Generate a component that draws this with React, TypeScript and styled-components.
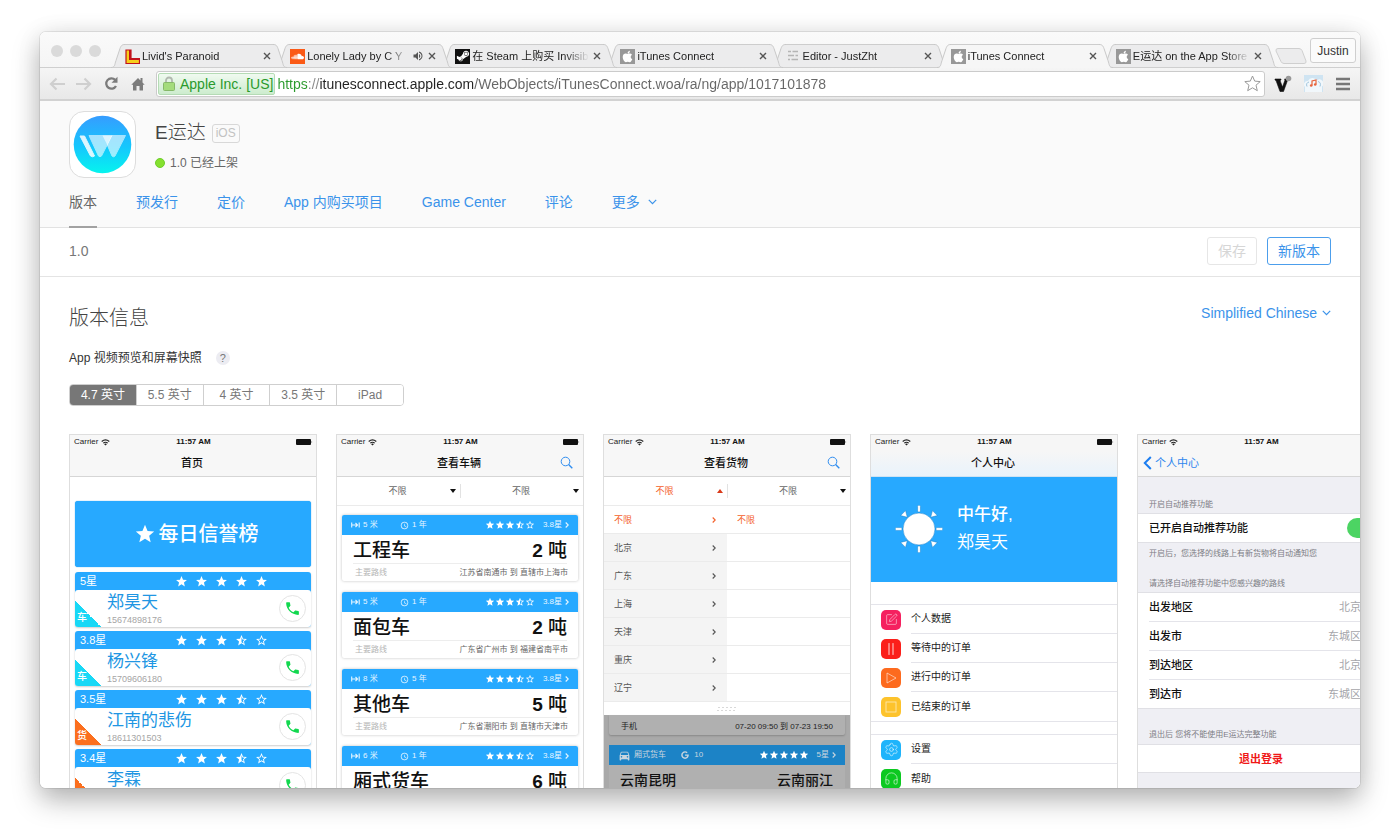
import React from "react";
import styled, { createGlobalStyle, css } from "styled-components";
import { FaApple, FaGoogle, FaSoundcloud, FaSteamSymbol } from "react-icons/fa";
import {
  MdAccessTime,
  MdDirectionsCar,
  MdPhone,
  MdStar,
  MdStarBorder,
  MdStarHalf,
  MdVolumeUp,
} from "react-icons/md";
import { Headphones, Settings, SquarePen } from "lucide-react";

const sans = `"Liberation Sans", "Noto Sans CJK SC", sans-serif`;
const link = "#3b93ea";
const brand = "#27a9ff";
const orange = "#f4602a";

const GlobalStyle = createGlobalStyle`
  *, *::before, *::after { box-sizing: border-box; }
  body {
    margin: 0;
    background: #fff;
    color: #444;
    font-family: ${sans};
    font-size: 14px;
    line-height: 20px;
  }
  button, input { font: inherit; color: inherit; margin: 0; }
  button { padding: 0; border: 0; background: none; cursor: pointer; }
  a { text-decoration: none; }
  h1, h2, h3, p, ul { margin: 0; padding: 0; font-weight: 400; }
  ul { list-style: none; }
  svg { display: block; flex: none; }
`;

/* ---------- Browser window ---------- */

const Desktop = styled.div`
  padding: 32px 40px 48px;
  height: 100vh;
  overflow: hidden;
`;

const Window = styled.div`
  display: flex;
  flex-direction: column;
  height: 100%;
  overflow: hidden;
  border-radius: 6px;
  background: #fff;
`;

const WindowShadow = styled.div`
  height: 100%;
  border-radius: 6px;
  box-shadow: 0 0 0 1px rgba(0, 0, 0, 0.08), 0 12px 28px rgba(0, 0, 0, 0.28), 0 2px 26px rgba(0, 0, 0, 0.08);
`;

const TabStrip = styled.div`
  display: flex;
  flex: none;
  height: 36px;
  padding: 0 4px 0 11px;
  background: linear-gradient(#fafafa, #f5f5f5);
  box-shadow: inset 0 -1px #cfcfcf;
`;

const Lights = styled.div`
  display: flex;
  gap: 7px;
  width: 60px;
  padding-top: 13px;
`;

const Light = styled.button`
  width: 12px;
  height: 12px;
  border-radius: 50%;
  background: #dadada;
`;

const Tabs = styled.div`
  display: flex;
  flex: 1;
  min-width: 0;
  padding-top: 12px;
`;

const Tab = styled.div<{ $level: number }>`
  position: relative;
  z-index: ${(p) => p.$level};
  display: flex;
  flex: 1 1 0;
  min-width: 0;
  height: 24px;
  color: #222;
  font-size: 11px;

  & + & {
    margin-left: -11px;
  }
`;

const TabBody = styled.div<{ $active?: boolean }>`
  display: flex;
  flex: 1;
  align-items: center;
  gap: 2px;
  min-width: 0;
  border-top: 1px solid #cdcdcd;
  border-bottom: 1px solid ${(p) => (p.$active ? "#f6f6f6" : "#cfcfcf")};
  background: ${(p) => (p.$active ? "#f6f6f6" : "#ececed")};
`;

const TabTitle = styled.span`
  flex: 1;
  min-width: 0;
  overflow: hidden;
  white-space: nowrap;
  mask-image: linear-gradient(90deg, #000 calc(100% - 24px), transparent);
`;

const TabClose = styled.button`
  width: 12px;
  height: 12px;
  display: grid;
  place-items: center;
`;

const Favicon = styled.span<{ $bg?: string }>`
  display: grid;
  flex: none;
  place-items: center;
  width: 15px;
  height: 15px;
  overflow: hidden;
  background: ${(p) => p.$bg ?? "transparent"};
  color: #fff;
`;

const NewTab = styled.button`
  align-self: flex-end;
  margin: 0 3px 4px -3px;
`;

const Profile = styled.button`
  align-self: flex-start;
  width: 46px;
  height: 25px;
  margin-top: 6px;
  border: 1px solid #cfcfcf;
  border-radius: 3px;
  background: #fbfbfb;
  color: #333;
  font-size: 12px;
`;

const Toolbar = styled.div`
  display: flex;
  flex: none;
  align-items: center;
  gap: 9px;
  height: 33px;
  padding: 0 9px 0 8px;
  border-bottom: 2px solid #d2d2d2;
  background: linear-gradient(#f5f5f5, #e8e8e8);
`;

const ToolButton = styled.button<{ $muted?: boolean }>`
  display: grid;
  place-items: center;
  width: 18px;
  height: 20px;
  color: ${(p) => (p.$muted ? "#cfcfcf" : "#7c7c7c")};
`;

const Omnibox = styled.div`
  display: flex;
  flex: 1;
  align-items: center;
  gap: 2px;
  height: 26px;
  padding: 0 3px 0 1px;
  border: 1px solid #cbcbcb;
  border-radius: 3px;
  background: #fff;
`;

const SecureBadge = styled.button`
  display: flex;
  align-items: center;
  gap: 5px;
  height: 22px;
  padding: 0 1px 0 4px;
  border: 1px solid #b5dbb5;
  border-radius: 2px;
  background: linear-gradient(#f0faf0, #cdecce);
  color: #2a9a2c;
  white-space: nowrap;
`;

/* The scheme is green, the host black and the path grey. */
const UrlInput = styled.input`
  flex: 1;
  min-width: 0;
  height: 22px;
  padding: 0;
  border: 0;
  outline: 0;
  background: linear-gradient(90deg, #2a9a2c 32px, #888 32px 43px, #222 43px 196px, #666 196px);
  background-clip: text;
  -webkit-background-clip: text;
  -webkit-text-fill-color: transparent;
`;

const Extensions = styled.div`
  display: flex;
  align-items: center;
  gap: 12px;
`;

/* ---------- iTunes Connect page ---------- */

const Header = styled.header`
  flex: none;
  padding: 10px 29px 0;
  border-bottom: 1px solid #e2e2e2;
  background: #fafafa;
`;

const AppSummary = styled.div`
  display: flex;
  gap: 19px;
  height: 67px;
`;

const AppIcon = styled.div`
  display: grid;
  place-items: center;
  width: 67px;
  height: 67px;
  border: 1px solid #ddd;
  border-radius: 15px;
  background: #fff;
`;

const AppName = styled.div`
  display: flex;
  align-items: center;
  gap: 6px;
  height: 28px;
  margin-top: 8px;
`;

const AppTitle = styled.h1`
  color: #444;
  font-size: 19px;
  font-weight: 300;
`;

const Platform = styled.span`
  padding: 0 3px;
  border: 1px solid #d8d8d8;
  border-radius: 3px;
  color: #c2c2c2;
  font-size: 12px;
  line-height: 17px;
`;

const Status = styled.p`
  display: flex;
  align-items: center;
  gap: 5px;
  margin-top: 6px;
  color: #666;
  font-size: 12px;

  &::before {
    content: "";
    width: 10px;
    height: 10px;
    border: 1px solid #6dcf2a;
    border-radius: 50%;
    background: #85e02f;
  }
`;

const Nav = styled.nav`
  display: flex;
  gap: 39px;
  margin-bottom: -1px;
`;

const NavLink = styled.a<{ $active?: boolean }>`
  display: flex;
  align-items: center;
  gap: 8px;
  padding: 14px 0;
  border-bottom: 2px solid ${(p) => (p.$active ? "#a2a2a2" : "transparent")};
  color: ${(p) => (p.$active ? "#666" : link)};
`;

const VersionBar = styled.div`
  display: flex;
  flex: none;
  align-items: center;
  gap: 10px;
  height: 49px;
  padding: 0 29px 2px;
  border-bottom: 1px solid #e4e4e4;
  color: #777;
`;

const VersionNumber = styled.span`
  flex: 1;
`;

const ActionButton = styled.button<{ $primary?: boolean }>`
  height: 28px;
  padding: 0 10px;
  border: 1px solid ${(p) => (p.$primary ? "#4c9eec" : "#e6e6e6")};
  border-radius: 3px;
  background: #fff;
  color: ${(p) => (p.$primary ? link : "#d6d6d6")};
`;

const Content = styled.main`
  display: flex;
  flex: 1;
  flex-direction: column;
  min-height: 0;
  padding: 26px 0 0 29px;
`;

const SectionHead = styled.div`
  display: flex;
  align-items: flex-start;
  justify-content: space-between;
  padding-right: 29px;
`;

const SectionTitle = styled.h2`
  font-size: 20px;
  font-weight: 300;
  line-height: 30px;
`;

const LanguageButton = styled.button`
  display: flex;
  align-items: center;
  gap: 5px;
  color: ${link};
`;

const SubTitle = styled.h3`
  display: flex;
  align-items: center;
  gap: 14px;
  margin-top: 15px;
  color: #333;
  font-size: 12px;
`;

const Help = styled.button`
  width: 14px;
  height: 14px;
  border-radius: 50%;
  background: #ececf2;
  color: #777;
  font-size: 11px;
  line-height: 14px;
`;

const Segments = styled.div`
  display: flex;
  flex: none;
  align-self: flex-start;
  width: 335px;
  margin-top: 16px;
  overflow: hidden;
  border: 1px solid #cfcfcf;
  border-radius: 4px;
`;

const Segment = styled.button<{ $active?: boolean }>`
  flex: 1 1 0;
  height: 20px;
  background: ${(p) => (p.$active ? "#777" : "#fff")};
  color: ${(p) => (p.$active ? "#fff" : "#777")};
  font-size: 12px;

  & + & {
    border-left: 1px solid #cfcfcf;
  }
`;

const Strip = styled.div`
  display: flex;
  flex: 1;
  align-items: flex-start;
  gap: 19px;
  min-height: 0;
  margin-top: 28px;
  overflow: hidden;
`;

/* ---------- Phone previews ---------- */

const Phone = styled.article<{ $bg?: string }>`
  flex: 0 0 248px;
  height: 440px;
  overflow: hidden;
  border: 1px solid #dedede;
  background: ${(p) => p.$bg ?? "#fff"};
  color: #222;
  font-size: 8px;
  line-height: 12px;
`;

const PhoneHeader = styled.div<{ $tinted?: boolean }>`
  height: 42px;
  border-bottom: 1px solid ${(p) => (p.$tinted ? "#cfe3f3" : "#d6d6d6")};
  background: ${(p) => (p.$tinted ? "linear-gradient(#f6f6f6 40%, #e9f3fb)" : "#f7f7f7")};
`;

const StatusBar = styled.div`
  display: grid;
  grid-template-columns: 1fr auto 1fr;
  align-items: center;
  height: 14px;
  padding: 0 3px 0 4px;
`;

const Carrier = styled.span`
  display: flex;
  align-items: center;
  gap: 3px;
`;

const Clock = styled.b`
  color: #111;
`;

const BatterySlot = styled.span`
  justify-self: end;
`;

const PhoneNav = styled.div`
  display: grid;
  grid-template-columns: 1fr auto 1fr;
  align-items: center;
  height: 27px;
  padding: 0 10px 0 8px;
`;

const PhoneTitle = styled.span`
  grid-column: 2;
  color: #111;
  font-size: 11px;
  font-weight: 500;
`;

const NavSearch = styled.button`
  justify-self: end;
  color: #2f8df0;
`;

const BackButton = styled.button`
  display: flex;
  align-items: center;
  gap: 3px;
  margin-left: -3px;
  color: #2d86ee;
  font-size: 11px;
  line-height: 16px;
`;

/* Ranking screen */

const Ranking = styled.div`
  padding: 24px 5px 0;
`;

const Banner = styled.div`
  display: flex;
  align-items: center;
  justify-content: center;
  gap: 3px;
  height: 66px;
  margin-bottom: 5px;
  padding-left: 6px;
  border-radius: 3px;
  background: ${brand};
  box-shadow: 0 0 1px #0b86dd;
  color: #fff;
  font-size: 20px;
  font-weight: 500;
`;

const RankCard = styled.div`
  height: 55px;
  margin-bottom: 4px;
  border-radius: 3px;
  background: ${brand};
  box-shadow: 0 1px 2px rgba(0, 0, 0, 0.2);
`;

const RankHead = styled.div`
  display: flex;
  align-items: center;
  height: 18px;
  padding: 0 43px 0 5px;
  color: #fff;
  font-size: 11px;
`;

const StarRow = styled.span<{ $gap: number }>`
  display: flex;
  gap: ${(p) => p.$gap}px;
  margin-left: auto;
  color: #fff;
`;

const RankBody = styled.div`
  display: flex;
  align-items: center;
  height: 37px;
  padding-right: 5px;
  overflow: hidden;
  border-radius: 3px;
  background: #fff;
`;

const Corner = styled.span<{ $color: string }>`
  align-self: flex-end;
  width: 26px;
  height: 26px;
  padding: 11px 0 0 2px;
  background: linear-gradient(45deg, ${(p) => p.$color} 50%, transparent 50%);
  color: #fff;
  font-size: 10px;
  font-weight: 500;
`;

const Person = styled.div`
  flex: 1;
  padding-left: 6px;
`;

const PersonName = styled.div`
  color: #2196e3;
  font-size: 17px;
  line-height: 22px;
`;

const PersonPhone = styled.div`
  color: #a5a5a5;
  font-size: 9px;
`;

const CallButton = styled.button`
  display: grid;
  place-items: center;
  width: 27px;
  height: 27px;
  border: 1px solid #e4e4e4;
  border-radius: 50%;
  color: #12d84f;
`;

/* Vehicle and cargo screens */

const Filters = styled.div`
  display: grid;
  grid-template-columns: 1fr 1fr;
  height: 29px;
  padding: 7px 0;
  border-bottom: 1px solid #ebebeb;
`;

const Filter = styled.button<{ $open?: boolean }>`
  display: grid;
  grid-template-columns: 1fr 10px;
  align-items: center;
  padding-left: 8px;
  color: ${(p) => (p.$open ? orange : "#666")};
  font-size: 9px;

  & + & {
    border-left: 1px solid #e2e2e2;
  }
`;

const Caret = styled.span<{ $up?: boolean }>`
  border: 3px solid transparent;
  ${(p) =>
    p.$up
      ? css`
          border-top: 0;
          border-bottom: 4px solid #d93a1a;
        `
      : css`
          border-bottom: 0;
          border-top: 4px solid #111;
        `}
  justify-self: start;
`;

const Vehicles = styled.div`
  display: grid;
  gap: 11px;
  padding: 9px 5px;
`;

const VehicleCard = styled.div`
  height: 66px;
  overflow: hidden;
  border-radius: 2px;
  background: #fff;
  box-shadow: 0 0 3px rgba(0, 0, 0, 0.25);
`;

const VehicleHead = styled.div<{ $dim?: boolean }>`
  display: flex;
  align-items: center;
  gap: 8px;
  height: 20px;
  padding: 0 9px;
  background: ${(p) => (p.$dim ? "#1c83c6" : brand)};
  color: ${(p) => (p.$dim ? "#c9d5de" : "#e6f5ff")};
  white-space: nowrap;
`;

const Fact = styled.span<{ $width?: number }>`
  display: flex;
  align-items: center;
  gap: 3px;
  width: ${(p) => (p.$width ? `${p.$width}px` : "auto")};
`;

const VehicleMain = styled.div`
  display: flex;
  align-items: center;
  justify-content: space-between;
  height: 29px;
  margin: 0 11px;
  padding-top: 3px;
  border-bottom: 1px solid #ededed;
  color: #111;
  font-size: 19px;
  font-weight: 500;
`;

const VehicleRoute = styled.div`
  display: flex;
  align-items: center;
  justify-content: space-between;
  height: 17px;
  padding: 0 10px 0 13px;
  color: #666;
`;

const Faint = styled.span`
  color: #b5b5b5;
`;

const RegionRow = styled.div`
  display: grid;
  grid-template-columns: 1fr 1fr;
  height: 28px;
`;

const RegionButton = styled.button<{ $active?: boolean }>`
  display: flex;
  align-items: center;
  justify-content: space-between;
  padding: 1px 11px 0 10px;
  border-bottom: 1px solid #ebebeb;
  background: ${(p) => (p.$active ? "#fff" : "#f4f4f4")};
  color: ${(p) => (p.$active ? orange : "#555")};
  font-size: 9px;
`;

const CityButton = styled.button`
  padding: 1px 10px 0;
  border-bottom: 1px solid #ebebeb;
  color: ${orange};
  font-size: 9px;
  text-align: left;
`;

const Grip = styled.div`
  display: grid;
  place-items: center;
  height: 13px;
  background: #fff;
`;

const Dimmed = styled.div`
  height: 90px;
  padding: 0 5px;
  background: #a9a9a9;
`;

const DimmedRow = styled.div`
  display: flex;
  align-items: center;
  justify-content: space-between;
  height: 20px;
  margin-bottom: 10px;
  padding: 3px 12px 0;
  border-radius: 0 0 2px 2px;
  background: #b0b0b0;
  box-shadow: 0 1px 2px rgba(0, 0, 0, 0.2);
`;

const DimmedRoute = styled.div`
  display: flex;
  align-items: center;
  justify-content: space-between;
  height: 30px;
  padding: 0 12px 0 11px;
  background: #b0b0b0;
  color: #111;
  font-size: 14px;
  font-weight: 500;
`;

/* Profile screen */

const Hero = styled.div`
  display: flex;
  align-items: center;
  gap: 14px;
  height: 105px;
  padding: 0 0 2px 24px;
  background: ${brand};
  color: #fff;
  font-size: 17px;
  line-height: 28px;
`;

const Greeting = styled.div`
  font-weight: 500;
`;

const Menu = styled.ul`
  margin-top: 22px;
  border-top: 1px solid #e4e4ea;
  border-bottom: 1px solid #e4e4ea;

  & + & {
    margin-top: 12px;
  }
`;

const MenuItem = styled.li`
  display: flex;
  align-items: center;
  gap: 10px;
  height: 29px;
  padding-left: 10px;

  &:last-child > button {
    border-bottom: 0;
  }
`;

const MenuIcon = styled.span<{ $color: string }>`
  display: grid;
  place-items: center;
  width: 20px;
  height: 20px;
  border-radius: 5px;
  background: ${(p) => p.$color};
  color: rgba(255, 255, 255, 0.6);
`;

const MenuLabel = styled.button`
  flex: 1;
  height: 29px;
  border-bottom: 1px solid #e4e4ea;
  font-size: 10px;
  text-align: left;
`;

/* Settings screen */

const GroupNote = styled.p<{ $top: number; $bottom: number }>`
  padding: ${(p) => `${p.$top}px 11px ${p.$bottom}px`};
  color: #7d7d84;
  white-space: nowrap;
`;

const Group = styled.div`
  border-top: 1px solid #e0e0e5;
  border-bottom: 1px solid #e0e0e5;
  background: #fff;
`;

const SettingRow = styled.label`
  display: flex;
  align-items: center;
  justify-content: space-between;
  height: 28px;
  margin-left: 11px;
  color: #111;
  font-size: 11px;
  font-weight: 500;

  & + & {
    border-top: 1px solid #e4e4ea;
    height: 29px;
  }
`;

const SettingValue = styled.span`
  padding-right: 23px;
  color: #a5a5aa;
  font-weight: 400;
`;

const Toggle = styled.input`
  appearance: none;
  width: 34px;
  height: 20px;
  margin-right: 3px;
  border-radius: 10px;
  background: radial-gradient(circle at 24px 10px, #fff 9px, #4cd463 9px);
`;

const SignOut = styled.button`
  display: block;
  width: 100%;
  height: 27px;
  color: #f01818;
  font-size: 11px;
  font-weight: 700;
`;

/* ---------- Icons ---------- */

const TabEdge = ({ active, right }: { active?: boolean; right?: boolean }) => (
  <svg width="14" height="24" viewBox="0 0 14 24" aria-hidden="true">
    <g transform={right ? "translate(14 0) scale(-1 1)" : undefined}>
      <path
        d="M0 24 C4 24 3.500 21 5 16.500 L8.500 6 C9.800 2 10.500 .5 14 .5 V24 Z"
        fill={active ? "#f6f6f6" : "#ececed"}
      />
      <path d="M0 23.500 C4 23.500 3.500 21 5 16.500 L8.500 6 C9.800 2 10.500 .5 14 .5" fill="none" stroke="#c8c8c8" />
      {!active && <path d="M2 23.500 H14" stroke="#cfcfcf" />}
    </g>
  </svg>
);

const CloseIcon = () => (
  <svg width="8" height="8" viewBox="0 0 8 8" aria-hidden="true">
    <path d="M1 1 L7 7 M7 1 L1 7" stroke="#555" strokeWidth="1.400" />
  </svg>
);

const ArrowIcon = ({ flip }: { flip?: boolean }) => (
  <svg width="16" height="14" viewBox="0 0 16 14" aria-hidden="true">
    <path
      d={flip ? "M0 7 H14 M8.500 1.500 L14 7 L8.500 12.500" : "M16 7 H2 M7.500 1.500 L2 7 L7.500 12.500"}
      fill="none"
      stroke="currentColor"
      strokeWidth="2.200"
    />
  </svg>
);

const ReloadIcon = () => (
  <svg width="15" height="15" viewBox="0 0 15 15" aria-hidden="true">
    <path d="M12 10 A5.200 5.200 0 1 1 11.200 3.900" fill="none" stroke="currentColor" strokeWidth="2.300" />
    <path d="M13.500 .8 V6.800 H7.500 Z" fill="currentColor" />
  </svg>
);

const HomeIcon = () => (
  <svg width="14" height="14" viewBox="0 0 14 14" aria-hidden="true">
    <path
      d="M7 1 L9.500 3.500 V1 H11.500 V5.500 L13.700 7.700 H12 V13.500 H8.500 V9 H5.500 V13.500 H2 V7.700 H.3 Z"
      fill="currentColor"
    />
  </svg>
);

const LockIcon = () => (
  <svg width="12" height="16" viewBox="0 0 12 16" aria-hidden="true">
    <path d="M3 8 V4.500 a3 3 0 0 1 6 0 V8" fill="none" stroke="#b2b9b0" strokeWidth="1.800" />
    <rect x=".5" y="6.500" width="11" height="8" rx="1" fill="#a4dc7c" stroke="#86b969" />
  </svg>
);

const BookmarkIcon = () => (
  <svg width="17" height="17" viewBox="0 0 17 17" aria-hidden="true">
    <path
      d="M8.500 1 L10.700 6.100 L16.200 6.600 L12 10.200 L13.300 15.700 L8.500 12.800 L3.700 15.700 L5 10.200 L.8 6.600 L6.300 6.100 Z"
      fill="#fff"
      stroke="#999"
      strokeLinejoin="round"
    />
  </svg>
);

const LividIcon = () => (
  <svg width="15" height="15" viewBox="0 0 15 15" aria-hidden="true">
    <path d="M1 1 H6 V9.500 H14.500 V14.500 H1 Z" fill="#f6cf1c" stroke="#c1121a" strokeWidth="1.200" />
    <path d="M4 1 H6 V9.500 H14.500 V11 H4 Z" fill="#c1121a" />
  </svg>
);

const EditorIcon = () => (
  <svg width="12" height="12" viewBox="0 0 12 12" aria-hidden="true">
    <path
      d="M1 1.500 H4 M5.500 1.500 H11 M1 5.500 H7 M8.500 5.500 H11 M1 9.500 H3 M4.500 9.500 H11"
      stroke="#b5b5b5"
      strokeWidth="1.400"
    />
  </svg>
);

const ExtensionV = () => (
  <svg width="18" height="18" viewBox="0 0 18 18" aria-hidden="true">
    <path d="M1 4 H7 V5 L6 5.500 L8.500 12 L11 5 L10.500 4 H14 L9.500 16.500 H6 L2 5.500 L1 5 Z" fill="#111" stroke="#111" strokeWidth=".6" />
    <circle cx="14.500" cy="3.500" r="2.800" fill="#999" />
  </svg>
);

const ExtensionCloud = () => (
  <svg width="19" height="17" viewBox="0 0 19 17" aria-hidden="true">
    <rect width="19" height="17" fill="#cfe4f2" />
    <path d="M1 12 a3.500 3.500 0 0 1 3-6 a5 5 0 0 1 9-.5 a3.500 3.500 0 0 1 5 6 V17 H1 Z" fill="#f1f7fb" />
    <path d="M3 11.500 Q1.500 8 5 7 M14 6.500 Q17.500 7.500 16 11.500" fill="none" stroke="#9fc4dd" />
    <path d="M8 10.500 V6 L12 5 V9.500" fill="none" stroke="#e8643c" strokeWidth="1.200" />
    <circle cx="7.200" cy="10.500" r="1.300" fill="#e8643c" />
    <circle cx="11.200" cy="9.500" r="1.300" fill="#e8643c" />
  </svg>
);

const MenuBars = () => (
  <svg width="16" height="14" viewBox="0 0 16 14" aria-hidden="true">
    <path d="M1 2 H15 M1 7 H15 M1 12 H15" stroke="#777" strokeWidth="2.600" />
  </svg>
);

const ChevronDown = () => (
  <svg width="9" height="6" viewBox="0 0 9 6" aria-hidden="true">
    <path d="M.8 .8 L4.500 4.600 L8.200 .8" fill="none" stroke={link} strokeWidth="1.200" />
  </svg>
);

const ChevronRight = () => (
  <svg width="4" height="6" viewBox="0 0 4 6" aria-hidden="true">
    <path d="M.7 .5 L3.200 3 L.7 5.500" fill="none" stroke="currentColor" strokeWidth="1.100" />
  </svg>
);

const AppLogo = () => (
  <svg width="59" height="59" viewBox="0 0 59 59" aria-hidden="true">
    <defs>
      <linearGradient id="logoFill" x1="0" y1="0" x2="0" y2="1">
        <stop offset="0" stopColor="#369cff" />
        <stop offset=".55" stopColor="#14c8fd" />
        <stop offset="1" stopColor="#06f4ee" />
      </linearGradient>
    </defs>
    <circle cx="29.500" cy="29.500" r="28.800" fill="url(#logoFill)" />
    <g fill="#fff" strokeLinejoin="round">
      <path d="M7 21 H11.500 L21.500 41 Q19.500 42.500 17.500 41 Z" opacity=".85" stroke="#fff" />
      <path d="M16 20.500 H39 L28.500 41 Q27 42.500 25.500 41 Z" opacity=".6" stroke="#fff" />
      <path d="M34.300 30 L39 20.500 H52.500 L42 41 Q40.500 42.500 39 41 Z" opacity=".6" stroke="#fff" />
      <path d="M29.500 20.500 H39 L34.300 30 Z" opacity=".6" />
    </g>
  </svg>
);

const WifiIcon = () => (
  <svg width="9" height="7" viewBox="0 0 9 7" aria-hidden="true">
    <path d="M.7 2.500 Q4.500 -.8 8.300 2.500 M2.200 4.100 Q4.500 2.300 6.800 4.100" fill="none" stroke="#222" strokeWidth="1.100" />
    <path d="M3 5 Q4.500 4 6 5 L4.500 6.600 Z" fill="#222" />
  </svg>
);

const BatteryIcon = () => (
  <svg width="17" height="6" viewBox="0 0 17 6" aria-hidden="true">
    <rect width="15" height="6" rx="1" fill="#111" />
    <path d="M15.600 2 Q16.800 3 15.600 4 Z" fill="#111" />
  </svg>
);

const SearchIcon = () => (
  <svg width="13" height="13" viewBox="0 0 13 13" aria-hidden="true">
    <circle cx="5.500" cy="5.500" r="4.300" fill="none" stroke="currentColor" />
    <path d="M8.600 8.600 L12.300 12.300" stroke="currentColor" strokeWidth="1.400" />
  </svg>
);

const BackIcon = () => (
  <svg width="9" height="14" viewBox="0 0 9 14" aria-hidden="true">
    <path d="M7.800 1 L1.800 7 L7.800 13" fill="none" stroke="#1b7df0" strokeWidth="2" />
  </svg>
);

const LengthIcon = () => (
  <svg width="9" height="6" viewBox="0 0 9 6" aria-hidden="true">
    <path d="M.7 .5 V5.500 M.7 3 H6.500 M4.500 1 L6.500 3 L4.500 5 M8.200 .5 V5.500" fill="none" stroke="currentColor" strokeWidth="1.100" />
  </svg>
);

const GripDots = () => (
  <svg width="20" height="6" viewBox="0 0 20 6" aria-hidden="true">
    <path d="M1 1.500 H20 M0 4.500 H20" stroke="#d9d9d9" strokeDasharray="2 2" />
  </svg>
);

const SunIcon = () => (
  <svg width="48" height="48" viewBox="0 0 48 48" aria-hidden="true">
    <g fill="#fff" stroke="#1680cc" strokeWidth=".5">
      <circle cx="24" cy="24" r="16" />
      {[0, 90, 180, 270].map((a) => (
        <rect key={a} x="22.600" y=".3" width="2.800" height="6.700" rx="1" transform={`rotate(${a} 24 24)`} />
      ))}
      {[45, 135, 225, 315].map((a) => (
        <path key={a} d="M20.500 1.500 H27.500 L24 7.500 Z" transform={`rotate(${a} 24 24)`} />
      ))}
    </g>
  </svg>
);

const PauseGlyph = () => (
  <svg width="12" height="12" viewBox="0 0 12 12" aria-hidden="true">
    <path d="M3.500 .5 H4.500 V11.500 H3.500 Z M7.500 .5 H8.500 V11.500 H7.500 Z" fill="none" stroke="currentColor" strokeWidth=".7" />
  </svg>
);

const PlayGlyph = () => (
  <svg width="12" height="12" viewBox="0 0 12 12" aria-hidden="true">
    <path d="M2 1 L11 6 L2 11 Z" fill="none" stroke="currentColor" strokeWidth=".9" />
  </svg>
);

const StopGlyph = () => (
  <svg width="12" height="12" viewBox="0 0 12 12" aria-hidden="true">
    <rect x="1" y="1" width="10" height="10" fill="none" stroke="currentColor" strokeWidth=".9" />
  </svg>
);

/* ---------- Composite parts ---------- */

const Stars = ({ value, size, gap }: { value: number; size: number; gap: number }) => (
  <StarRow $gap={gap} role="img" aria-label={`${value} / 5`}>
    {[1, 2, 3, 4, 5].map((n) =>
      value >= n ? (
        <MdStar key={n} size={size} />
      ) : value > n - 1 ? (
        <MdStarHalf key={n} size={size} />
      ) : (
        <MdStarBorder key={n} size={size} />
      ),
    )}
  </StarRow>
);

const PhoneTop = ({ title, search, back, tinted }: { title?: string; search?: boolean; back?: string; tinted?: boolean }) => (
  <PhoneHeader $tinted={tinted}>
    <StatusBar>
      <Carrier>
        Carrier <WifiIcon />
      </Carrier>
      <Clock>11:57 AM</Clock>
      <BatterySlot>
        <BatteryIcon />
      </BatterySlot>
    </StatusBar>
    <PhoneNav>
      {back && (
        <BackButton>
          <BackIcon />
          {back}
        </BackButton>
      )}
      {title && <PhoneTitle>{title}</PhoneTitle>}
      {search && (
        <NavSearch aria-label="搜索">
          <SearchIcon />
        </NavSearch>
      )}
    </PhoneNav>
  </PhoneHeader>
);

const appleIcon = (
  <Favicon $bg="#989898">
    <FaApple size={13} />
  </Favicon>
);

const tabs = [
  { icon: <Favicon><LividIcon /></Favicon>, title: "Livid's Paranoid" },
  { icon: <Favicon $bg="#fb5a16"><FaSoundcloud size={13} /></Favicon>, title: "Lonely Lady by C Y", audio: true },
  { icon: <Favicon $bg="#111"><FaSteamSymbol size={14} /></Favicon>, title: "在 Steam 上购买 Invisib" },
  { icon: appleIcon, title: "iTunes Connect" },
  { icon: <Favicon><EditorIcon /></Favicon>, title: "Editor - JustZht" },
  { icon: appleIcon, title: "iTunes Connect", active: true },
  { icon: appleIcon, title: "E运达 on the App Store" },
];

const navItems = ["版本", "预发行", "定价", "App 内购买项目", "Game Center", "评论", "更多"];
const sizes = ["4.7 英寸", "5.5 英寸", "4 英寸", "3.5 英寸", "iPad"];

const ranking = [
  { score: "5星", stars: 5, name: "郑昊天", phone: "15674898176", tag: "车" },
  { score: "3.8星", stars: 3.5, name: "杨兴锋", phone: "15709606180", tag: "车" },
  { score: "3.5星", stars: 3.5, name: "江南的悲伤", phone: "18611301503", tag: "货" },
  { score: "3.4星", stars: 3.5, name: "李霖", phone: "", tag: "" },
];

const vehicles = [
  { length: "5 米", age: "1 年", name: "工程车", load: "2", route: "江苏省南通市 到 直辖市上海市" },
  { length: "5 米", age: "1 年", name: "面包车", load: "2", route: "广东省广州市 到 福建省南平市" },
  { length: "8 米", age: "5 年", name: "其他车", load: "5", route: "广东省潮阳市 到 直辖市天津市" },
  { length: "6 米", age: "1 年", name: "厢式货车", load: "6", route: "" },
];

const regions = ["不限", "北京", "广东", "上海", "天津", "重庆", "辽宁"];

const orderMenu = [
  { label: "个人数据", color: "#f5215f", icon: <SquarePen size={13} strokeWidth={1.5} /> },
  { label: "等待中的订单", color: "#fb1f1a", icon: <PauseGlyph /> },
  { label: "进行中的订单", color: "#fd6a1e", icon: <PlayGlyph /> },
  { label: "已结束的订单", color: "#fdc32c", icon: <StopGlyph /> },
];

const systemMenu = [
  { label: "设置", color: "#1fb4fb", icon: <Settings size={15} strokeWidth={1.5} /> },
  { label: "帮助", color: "#0cc920", icon: <Headphones size={15} strokeWidth={1.5} /> },
];

const places = [
  ["出发地区", "北京"],
  ["出发市", "东城区"],
  ["到达地区", "北京"],
  ["到达市", "东城区"],
];

const RankingScreen = () => (
  <Phone>
    <PhoneTop title="首页" />
    <Ranking>
      <Banner>
        <MdStar size={22} />
        每日信誉榜
      </Banner>
      {ranking.map((r) => (
        <RankCard key={r.name}>
          <RankHead>
            {r.score}
            <Stars value={r.stars} size={13} gap={7} />
          </RankHead>
          <RankBody>
            <Corner $color={r.tag === "车" ? "#18d8f6" : "#fb6f1e"}>{r.tag}</Corner>
            <Person>
              <PersonName>{r.name}</PersonName>
              <PersonPhone>{r.phone || "\u00a0"}</PersonPhone>
            </Person>
            <CallButton aria-label={`呼叫 ${r.name}`}>
              <MdPhone size={17} />
            </CallButton>
          </RankBody>
        </RankCard>
      ))}
    </Ranking>
  </Phone>
);

const FilterBar = ({ open }: { open?: boolean }) => (
  <Filters>
    <Filter $open={open}>
      不限
      <Caret $up={open} />
    </Filter>
    <Filter>
      不限
      <Caret />
    </Filter>
  </Filters>
);

const VehiclesScreen = () => (
  <Phone>
    <PhoneTop title="查看车辆" search />
    <FilterBar />
    <Vehicles>
      {vehicles.map((v) => (
        <VehicleCard key={v.name}>
          <VehicleHead>
            <Fact $width={41}>
              <LengthIcon />
              {v.length}
            </Fact>
            <Fact>
              <MdAccessTime size={9} />
              {v.age}
            </Fact>
            <Stars value={3.5} size={10} gap={0} />
            <Fact>
              3.8星
              <ChevronRight />
            </Fact>
          </VehicleHead>
          <VehicleMain>
            <span>{v.name}</span>
            <span>
              <b>{v.load}</b> 吨
            </span>
          </VehicleMain>
          {v.route && (
            <VehicleRoute>
              <Faint>主要路线</Faint>
              {v.route}
            </VehicleRoute>
          )}
        </VehicleCard>
      ))}
    </Vehicles>
  </Phone>
);

const CargoScreen = () => (
  <Phone>
    <PhoneTop title="查看货物" search />
    <FilterBar open />
    {regions.map((name, i) => (
      <RegionRow key={name}>
        <RegionButton $active={i === 0}>
          {name}
          <ChevronRight />
        </RegionButton>
        <CityButton>{i === 0 ? "不限" : ""}</CityButton>
      </RegionRow>
    ))}
    <Grip>
      <GripDots />
    </Grip>
    <Dimmed>
      <DimmedRow>
        <span>手机</span>
        <span>07-20 09:50 到 07-23 19:50</span>
      </DimmedRow>
      <VehicleHead $dim>
        <Fact $width={55}>
          <MdDirectionsCar size={13} />
          厢式货车
        </Fact>
        <Fact>
          <FaGoogle size={8} />
          &nbsp;10
        </Fact>
        <Stars value={5} size={10} gap={0} />
        <Fact>
          5星
          <ChevronRight />
        </Fact>
      </VehicleHead>
      <DimmedRoute>
        <span>云南昆明</span>
        <span>云南丽江</span>
      </DimmedRoute>
    </Dimmed>
  </Phone>
);

const MenuList = ({ items }: { items: typeof orderMenu }) => (
  <Menu>
    {items.map((m) => (
      <MenuItem key={m.label}>
        <MenuIcon $color={m.color}>{m.icon}</MenuIcon>
        <MenuLabel>{m.label}</MenuLabel>
      </MenuItem>
    ))}
  </Menu>
);

const ProfileScreen = () => (
  <Phone>
    <PhoneTop title="个人中心" tinted />
    <Hero>
      <SunIcon />
      <div>
        <Greeting>中午好,</Greeting>
        <div>郑昊天</div>
      </div>
    </Hero>
    <MenuList items={orderMenu} />
    <MenuList items={systemMenu} />
  </Phone>
);

const SettingsScreen = () => (
  <Phone $bg="#efeff4">
    <PhoneTop back="个人中心" />
    <GroupNote $top={22} $bottom={2}>开启自动推荐功能</GroupNote>
    <Group>
      <SettingRow>
        已开启自动推荐功能
        <Toggle type="checkbox" defaultChecked />
      </SettingRow>
    </Group>
    <GroupNote $top={5} $bottom={0}>开启后，您选择的线路上有新货物将自动通知您</GroupNote>
    <GroupNote $top={18} $bottom={2}>请选择自动推荐功能中您感兴趣的路线</GroupNote>
    <Group>
      {places.map(([label, value]) => (
        <SettingRow key={label} as="div">
          {label}
          <SettingValue>{value}</SettingValue>
        </SettingRow>
      ))}
    </Group>
    <GroupNote $top={20} $bottom={3}>退出后 您将不能使用E运达完整功能</GroupNote>
    <Group>
      <SignOut>退出登录</SignOut>
    </Group>
  </Phone>
);

const BrowserChrome = () => (
  <>
    <TabStrip>
      <Lights>
        <Light aria-label="关闭" />
        <Light aria-label="最小化" />
        <Light aria-label="缩放" />
      </Lights>
      <Tabs role="tablist">
        {tabs.map((t, i) => (
          <Tab key={i} role="tab" aria-selected={!!t.active} $level={t.active ? 10 : tabs.length - i}>
            <TabEdge active={t.active} />
            <TabBody $active={t.active}>
              {t.icon}
              <TabTitle>{t.title}</TabTitle>
              {t.audio && <MdVolumeUp size={12} color="#555" />}
              <TabClose aria-label="关闭标签页">
                <CloseIcon />
              </TabClose>
            </TabBody>
            <TabEdge active={t.active} right />
          </Tab>
        ))}
      </Tabs>
      <NewTab aria-label="新标签页">
        <svg width="32" height="16" viewBox="0 0 32 16" aria-hidden="true">
          <path d="M3 .5 H24 Q26 .5 27 2.500 L31 13 Q31.500 15.500 29 15.500 H9 Q7 15.500 6 13.500 L1 3 Q.5 .5 3 .5 Z" fill="#ececed" stroke="#cfcfcf" />
        </svg>
      </NewTab>
      <Profile>Justin</Profile>
    </TabStrip>
    <Toolbar>
      <ToolButton $muted aria-label="后退">
        <ArrowIcon />
      </ToolButton>
      <ToolButton $muted aria-label="前进">
        <ArrowIcon flip />
      </ToolButton>
      <ToolButton aria-label="重新加载">
        <ReloadIcon />
      </ToolButton>
      <ToolButton aria-label="主页">
        <HomeIcon />
      </ToolButton>
      <Omnibox>
        <SecureBadge>
          <LockIcon />
          Apple Inc. [US]
        </SecureBadge>
        <UrlInput
          aria-label="地址"
          defaultValue="https://itunesconnect.apple.com/WebObjects/iTunesConnect.woa/ra/ng/app/1017101878"
        />
        <button aria-label="收藏">
          <BookmarkIcon />
        </button>
      </Omnibox>
      <Extensions>
        <button aria-label="扩展">
          <ExtensionV />
        </button>
        <button aria-label="音乐">
          <ExtensionCloud />
        </button>
        <button aria-label="菜单">
          <MenuBars />
        </button>
      </Extensions>
    </Toolbar>
  </>
);

export default function App() {
  return (
    <Desktop>
      <GlobalStyle />
      <WindowShadow>
        <Window>
          <BrowserChrome />
          <Header>
            <AppSummary>
              <AppIcon>
                <AppLogo />
              </AppIcon>
              <div>
                <AppName>
                  <AppTitle>E运达</AppTitle>
                  <Platform>iOS</Platform>
                </AppName>
                <Status>1.0 已经上架</Status>
              </div>
            </AppSummary>
            <Nav>
              {navItems.map((item, i) => (
                <NavLink key={item} href="#" $active={i === 0}>
                  {item}
                  {item === "更多" && <ChevronDown />}
                </NavLink>
              ))}
            </Nav>
          </Header>
          <VersionBar>
            <VersionNumber>1.0</VersionNumber>
            <ActionButton disabled>保存</ActionButton>
            <ActionButton $primary>新版本</ActionButton>
          </VersionBar>
          <Content>
            <SectionHead>
              <SectionTitle>版本信息</SectionTitle>
              <LanguageButton>
                Simplified Chinese
                <ChevronDown />
              </LanguageButton>
            </SectionHead>
            <SubTitle>
              App 视频预览和屏幕快照
              <Help aria-label="帮助">?</Help>
            </SubTitle>
            <Segments>
              {sizes.map((s, i) => (
                <Segment key={s} $active={i === 0}>
                  {s}
                </Segment>
              ))}
            </Segments>
            <Strip>
              <RankingScreen />
              <VehiclesScreen />
              <CargoScreen />
              <ProfileScreen />
              <SettingsScreen />
            </Strip>
          </Content>
        </Window>
      </WindowShadow>
    </Desktop>
  );
}
